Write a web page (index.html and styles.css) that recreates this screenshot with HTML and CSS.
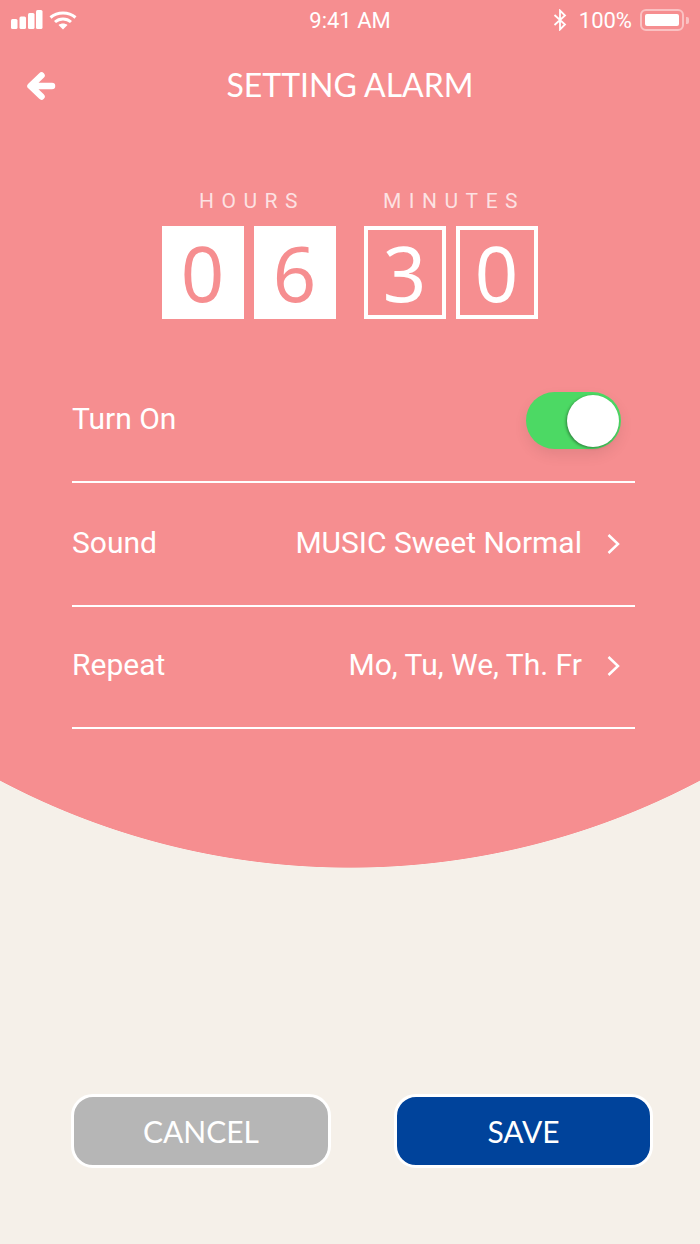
FILE: index.html
```html
<!DOCTYPE html>
<html lang="en">
<head>
  <meta charset="UTF-8">
  <meta name="viewport" content="width=device-width, initial-scale=1.0">
  <title>Setting Alarm</title>
  <link rel="stylesheet" href="styles.css">
</head>
<body>
  <div class="screen">
    <div class="status">
      <div class="status__left">
        <svg width="32" height="20" viewBox="0 0 32 20" fill="#fff">
          <rect x="0" y="9" width="6.5" height="10" rx="1.5"/>
          <rect x="8.5" y="6.5" width="6.5" height="12.5" rx="1.5"/>
          <rect x="17" y="3" width="6.5" height="16" rx="1.5"/>
          <rect x="25" y="0" width="6.5" height="19" rx="1.5"/>
        </svg>
        <svg width="28" height="20" viewBox="0 0 28 20" fill="none" stroke="#fff" stroke-width="3">
          <path d="M1.5 7.5C8.5 1.5 19.5 1.5 26.5 7.5"/>
          <path d="M6 12C10.5 8 17.5 8 22 12"/>
          <path d="M14 19.5L9.5 15C12 13 16 13 18.5 15Z" fill="#fff" stroke="none"/>
        </svg>
      </div>
      <div class="status__time">9:41 AM</div>
      <div class="status__right">
        <svg width="14" height="22" viewBox="0 0 14 22" fill="none" stroke="#fff" stroke-width="1.8">
          <path d="M1.5 6L12 15.5L7 20.5V1.5L12 6.5L1.5 16"/>
        </svg>
        <span class="status__pct">100%</span>
        <div class="battery"><div class="battery__fill"></div></div>
        <div class="battery__tip"></div>
      </div>
    </div>

    <div class="header">
      <svg class="header__back" width="30" height="30" viewBox="0 0 30 30" fill="none" stroke="#fff" stroke-width="6.5" stroke-linecap="round" stroke-linejoin="round">
        <path d="M26 15H6M15.5 4.5L4.5 15L15.5 25.5"/>
      </svg>
      <h1 class="header__title">SETTING ALARM</h1>
    </div>

    <div class="clock">
      <div class="clock__group">
        <div class="clock__label">HOURS</div>
        <div class="clock__digits">
          <div class="digit digit--solid">0</div>
          <div class="digit digit--solid">6</div>
        </div>
      </div>
      <div class="clock__group">
        <div class="clock__label">MINUTES</div>
        <div class="clock__digits">
          <div class="digit">3</div>
          <div class="digit">0</div>
        </div>
      </div>
    </div>

    <div class="settings">
      <div class="row row--toggle">
        <span>Turn On</span>
        <div class="toggle"><div class="toggle__knob"></div></div>
      </div>
      <div class="row row--tall">
        <span>Sound</span>
        <div class="row__value">
          <span>MUSIC Sweet Normal</span>
          <svg width="16" height="22" viewBox="0 0 16 22" fill="none" stroke="#fff" stroke-width="2.5"><path d="M2.5 2L12 11L2.5 20"/></svg>
        </div>
      </div>
      <div class="row">
        <span>Repeat</span>
        <div class="row__value">
          <span>Mo, Tu, We, Th. Fr</span>
          <svg width="16" height="22" viewBox="0 0 16 22" fill="none" stroke="#fff" stroke-width="2.5"><path d="M2.5 2L12 11L2.5 20"/></svg>
        </div>
      </div>
    </div>

    <div class="actions">
      <button class="btn btn--cancel">CANCEL</button>
      <button class="btn btn--save">SAVE</button>
    </div>
  </div>
</body>
</html>
```

FILE: styles.css
```css
* {
  box-sizing: border-box;
  margin: 0;
  padding: 0;
}

body {
  width: 700px;
  height: 1244px;
  overflow: hidden;
  background-color: #f5f0e9;
  font-family: Roboto, sans-serif;
  color: #fff;
}

.screen {
  height: 1244px;
  background: radial-gradient(circle 747.5px at 350px 120.5px, #f68e90 99.9%, transparent 100%);
}

.status {
  height: 40px;
  padding: 0 11px;
  display: flex;
  justify-content: space-between;
  align-items: center;
  position: relative;
  font-size: 22px;
  font-weight: 400;
}

.status__left {
  display: flex;
  align-items: center;
  gap: 6px;
}

.status__time {
  position: absolute;
  left: 0;
  right: 0;
  text-align: center;
}

.status__right {
  display: flex;
  align-items: center;
}

.status__pct {
  margin-left: 12px;
}

.battery {
  width: 44px;
  height: 22px;
  margin-left: 8px;
  padding: 3px;
  border: 2px solid rgba(255, 255, 255, 0.45);
  border-radius: 6px;
}

.battery__fill {
  height: 100%;
  background-color: #fff;
  border-radius: 2px;
}

.battery__tip {
  width: 3px;
  height: 7px;
  margin-left: 2px;
  background-color: rgba(255, 255, 255, 0.45);
  border-radius: 0 2px 2px 0;
}

.header {
  height: 92px;
  padding-left: 26px;
  display: flex;
  align-items: center;
  position: relative;
}

.header__title {
  position: absolute;
  left: 0;
  right: 0;
  top: 26px;
  text-align: center;
  font-family: Lato, sans-serif;
  font-size: 32px;
  line-height: 38px;
  font-weight: 400;
}

.clock {
  margin-top: 56px;
  display: flex;
  justify-content: center;
  gap: 28px;
  margin-left: -1px;
}

.clock__label {
  height: 26px;
  padding-left: 7px;
  text-align: center;
  font-size: 21px;
  line-height: 26px;
  letter-spacing: 7.5px;
  color: rgba(255, 255, 255, 0.75);
}

.clock__digits {
  margin-top: 12px;
  display: flex;
  gap: 10px;
}

.digit {
  width: 82px;
  height: 93px;
  border: 4px solid #fff;
  display: flex;
  justify-content: center;
  align-items: center;
  font-family: "Noto Sans", sans-serif;
  font-size: 76px;
  font-weight: 400;
  color: #fff;
}

.digit--solid {
  background-color: #fff;
  color: #f68e90;
}

.settings {
  margin: 0 65px 0 72px;
}

.row {
  height: 122px;
  border-bottom: 2px solid #fff;
  display: flex;
  justify-content: space-between;
  align-items: center;
  font-size: 30px;
  padding-bottom: 5px;
}

.row--tall {
  height: 124px;
  padding-bottom: 3px;
}

.row--toggle {
  height: 164px;
  padding-top: 37px;
  padding-bottom: 0;
  padding-right: 14px;
}

.row__value {
  display: flex;
  align-items: center;
  gap: 24px;
  padding-right: 13px;
}

.row__value svg {
  margin-top: 3px;
}

.toggle {
  width: 95px;
  height: 57px;
  border-radius: 29px;
  background-color: #4cd964;
  padding: 3px 2px 3px 0;
  display: flex;
  justify-content: flex-end;
  box-shadow: 0 6px 14px rgba(0, 0, 0, 0.08);
  margin-top: 4px;
}

.toggle__knob {
  width: 52px;
  height: 52px;
  border-radius: 50%;
  background-color: #fff;
  box-shadow: -1px 1px 3px rgba(0, 0, 0, 0.4);
}

.actions {
  margin: 365px 47px 0 71px;
  display: flex;
  justify-content: space-between;
}

.btn {
  width: 260px;
  height: 74px;
  border: 3px solid #fff;
  border-radius: 22px;
  font-family: Lato, sans-serif;
  font-size: 30px;
  color: #fff;
}

.btn--cancel {
  background-color: #b6b6b6;
}

.btn--save {
  width: 259px;
  background-color: #00439b;
}
```
